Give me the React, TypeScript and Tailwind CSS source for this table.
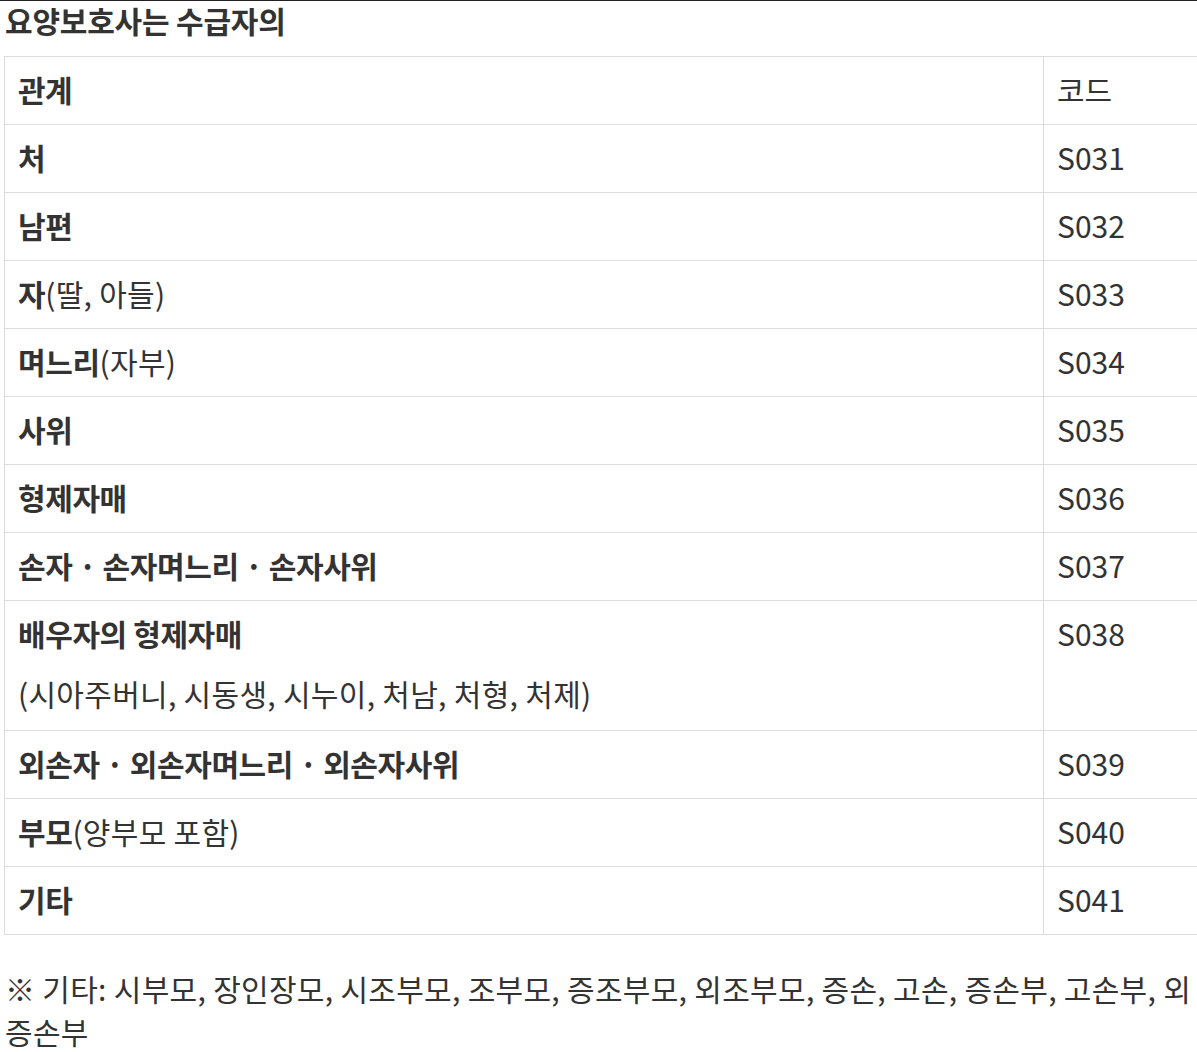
const rows: { label: React.ReactNode; code: string; tall?: boolean }[] = [
  { label: <b>처</b>, code: "S031" },
  { label: <b>남편</b>, code: "S032" },
  { label: <><b>자</b>(딸, 아들)</>, code: "S033" },
  { label: <><b>며느리</b>(자부)</>, code: "S034" },
  { label: <b>사위</b>, code: "S035" },
  { label: <b>형제자매</b>, code: "S036" },
  { label: <b>손자 · 손자며느리 · 손자사위</b>, code: "S037" },
  {
    label: (
      <>
        <b>배우자의 형제자매</b>
        <br />
        (시아주버니, 시동생, 시누이, 처남, 처형, 처제)
      </>
    ),
    code: "S038",
    tall: true,
  },
  { label: <b>외손자 · 외손자며느리 · 외손자사위</b>, code: "S039" },
  { label: <><b>부모</b>(양부모 포함)</>, code: "S040" },
  { label: <b>기타</b>, code: "S041" },
];

export default function App() {
  return (
    <div
      className="min-h-[1052px] w-[1197px] overflow-hidden bg-white text-[#333] border-t border-[#222]"
      style={{ fontFamily: '"Noto Sans CJK KR", "Noto Sans", sans-serif' }}
    >
      <h2 className="pl-[5px] pt-[2px] text-[30px] font-bold leading-[34px] tracking-[-0.2px]">요양보호사는 수급자의</h2>

      <table className="ml-[4px] mt-[19px] w-[1200px] border-collapse text-[30px] leading-[60px]">
        <colgroup>
          <col className="w-[1039px]" />
          <col />
        </colgroup>
        <tbody>
          <tr>
            <td className="border border-[#ddd] pl-[13px] pt-[2px] pb-[5px] align-top font-bold tracking-[-0.5px]">관계</td>
            <td className="border border-[#ddd] pl-[13px] pt-[2px] pb-[5px] align-top">코드</td>
          </tr>
          {rows.map((r) => (
            <tr key={r.code}>
              <td
                className={`border border-[#ddd] pl-[13px] pt-[2px] align-top font-normal tracking-[0.3px] [&_b]:font-bold [&_b]:tracking-[-0.4px] ${
                  r.tall ? "pb-[7px]" : "pb-[5px]"
                }`}
              >
                {r.label}
              </td>
              <td className="border border-[#ddd] pl-[13px] pt-[2px] pb-[5px] align-top">{r.code}</td>
            </tr>
          ))}
        </tbody>
      </table>

      <p className="mt-[32px] pl-[5px] text-[30px] leading-[43px] tracking-[0.3px] break-all">
        ※ 기타: 시부모, 장인장모, 시조부모, 조부모, 증조부모, 외조부모, 증손, 고손, 증손부, 고손부, 외증손부
      </p>
    </div>
  );
}
